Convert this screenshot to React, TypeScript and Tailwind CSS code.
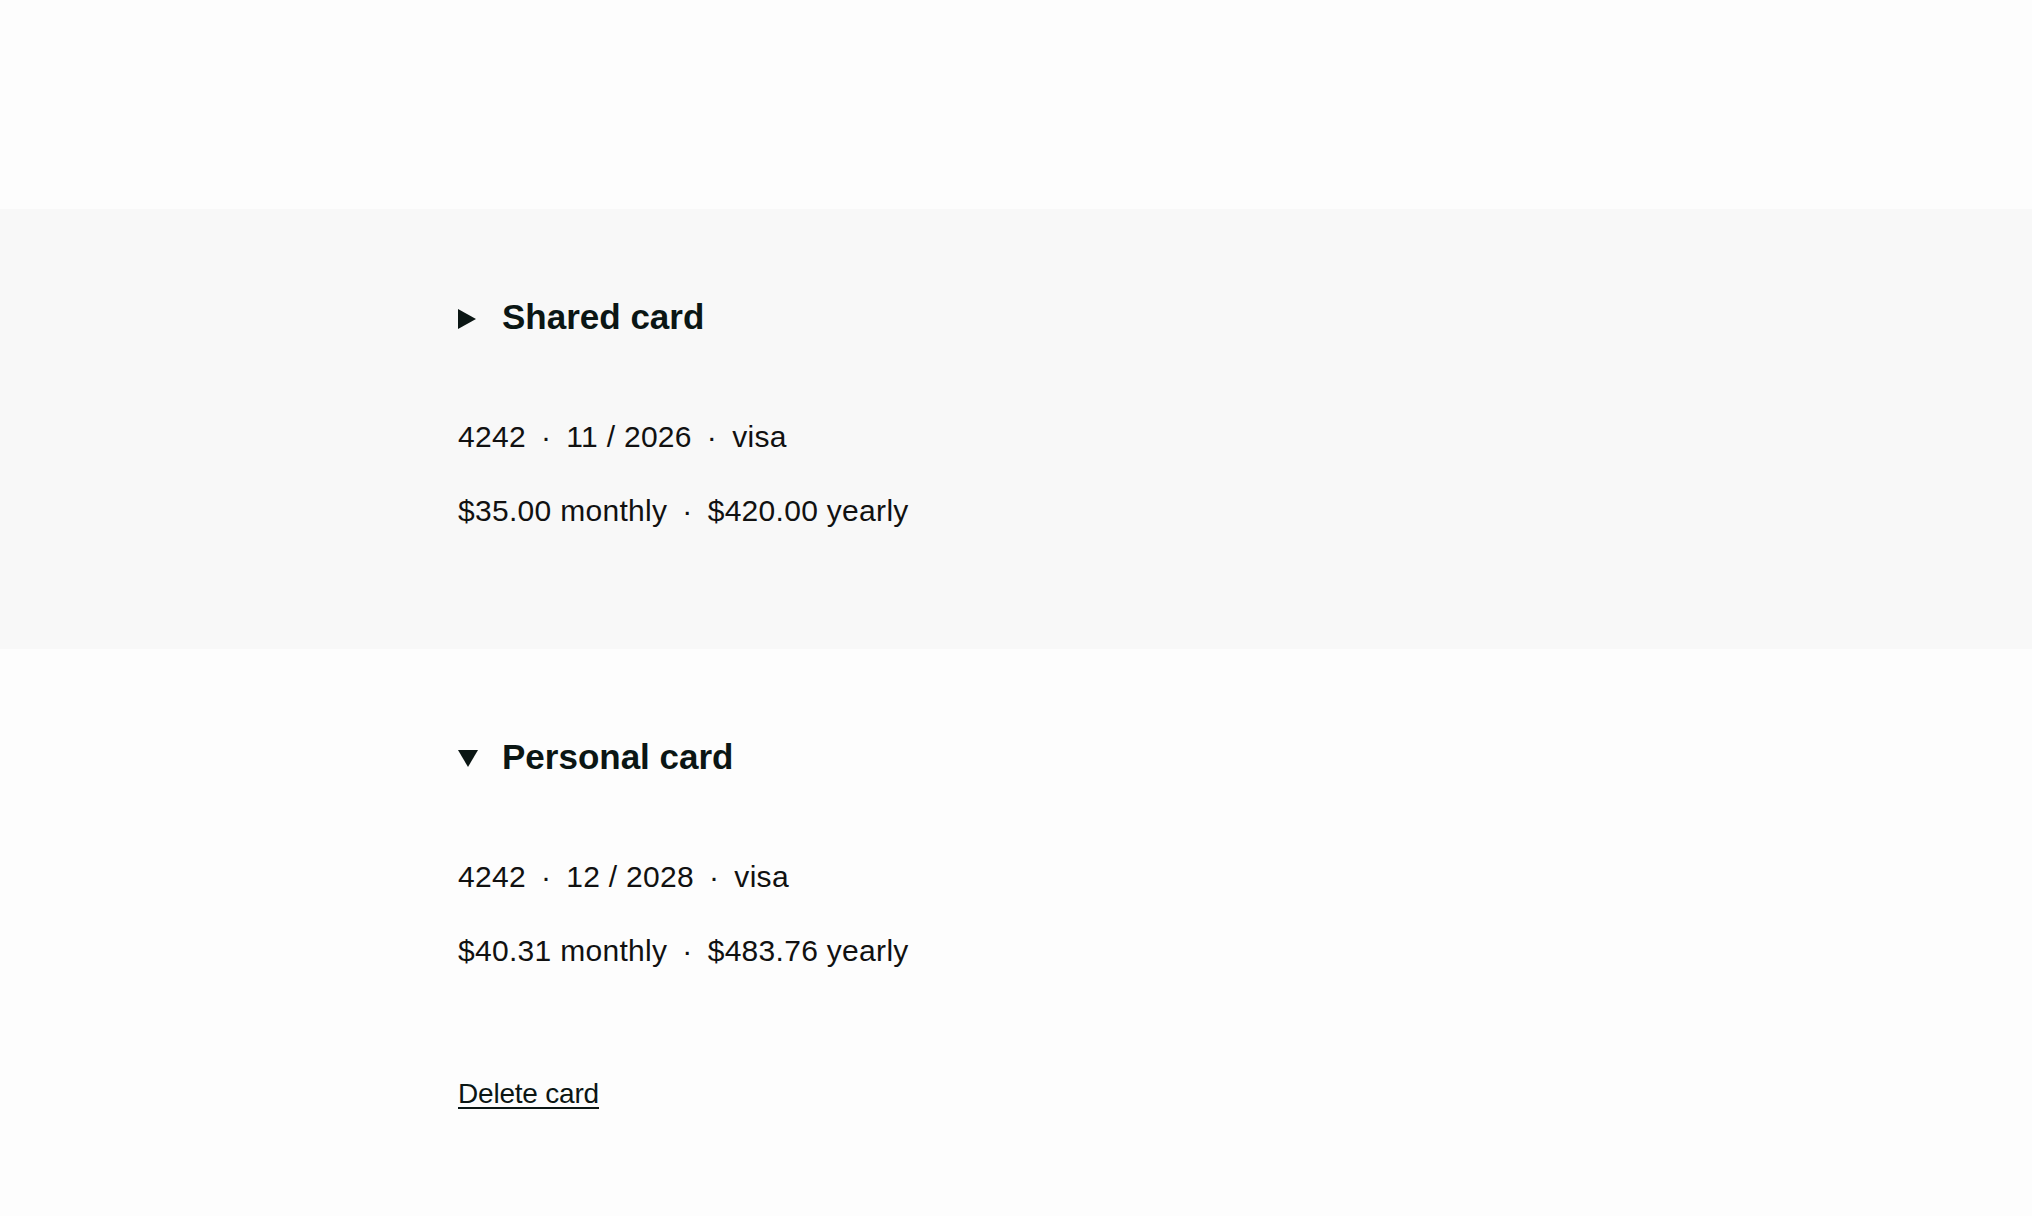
import React from 'react';

interface Card {
  name: string;
  last4: string;
  expiry: string;
  brand: string;
  monthly: string;
  yearly: string;
  open: boolean;
}

const CARDS: Card[] = [
  { name: 'Shared card', last4: '4242', expiry: '11 / 2026', brand: 'visa', monthly: '$35.00', yearly: '$420.00', open: false },
  { name: 'Personal card', last4: '4242', expiry: '12 / 2028', brand: 'visa', monthly: '$40.31', yearly: '$483.76', open: true },
];

const Dot = () => <span className="px-[15px]">·</span>;

const Caret = ({ open }: { open: boolean }) =>
  open ? (
    <svg width="20" height="17" viewBox="0 0 20 17" className="mt-[15px] shrink-0">
      <path d="M0 0 H20 L10 17 Z" fill="#0b1614" />
    </svg>
  ) : (
    <svg width="20" height="20" viewBox="0 0 20 20" className="mt-[14px] shrink-0">
      <path d="M0 0 L18 10 L0 20 Z" fill="#0b1614" />
    </svg>
  );

const CardSection = ({ card }: { card: Card }) => (
  <section className={card.open ? 'bg-[#fdfdfd] pt-[86px] pb-[110px]' : 'bg-[#f8f8f8] pt-[86px] pb-[120px]'}>
    <div className="max-w-[1116px] mx-auto">
      {/* Header */}
      <div className="flex items-start gap-[24px] h-[44px]">
        <Caret open={card.open} />
        <h2 className="text-[35px] leading-[44px] font-bold text-[#0b1614]">{card.name}</h2>
      </div>

      {/* Details */}
      <div className="mt-[80px] flex flex-col gap-[38px] text-[30px] leading-[36px] tracking-[0.3px] text-[#111]">
        <p>
          {card.last4}
          <Dot />
          {card.expiry}
          <Dot />
          {card.brand}
        </p>
        <p>
          {card.monthly} monthly
          <Dot />
          {card.yearly} yearly
        </p>
      </div>

      {card.open && (
        <div className="mt-[107px] leading-[36px]">
          <a href="#" className="text-[28px] leading-[36px] tracking-[-0.2px] text-[#0b1614] underline underline-offset-[4px] decoration-[2px]">
            Delete card
          </a>
        </div>
      )}
    </div>
  </section>
);

export default function App() {
  return (
    <div className="min-h-[1216px] bg-[#fdfdfd] pt-[209px]" style={{ fontFamily: '"Liberation Sans", Arial, sans-serif' }}>
      {CARDS.map((card) => (
        <CardSection key={card.name} card={card} />
      ))}
    </div>
  );
}
